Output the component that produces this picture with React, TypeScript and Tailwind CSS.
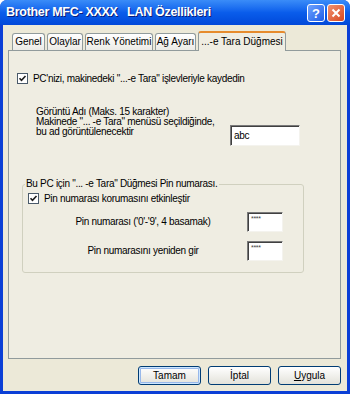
import React from "react";

function Check() {
  return (
    <div className="w-[11px] h-[11px] shrink-0 border border-[#4A5A6A] bg-white flex items-center justify-center">
      <svg width="9" height="9" viewBox="0 0 9 9">
        <path d="M1.5 4.2 L3.5 6.3 L7.5 2" stroke="#1E1E1E" strokeWidth="1.6" fill="none" />
      </svg>
    </div>
  );
}

function Field({ w, h, children }: { w: string; h: string; children?: React.ReactNode }) {
  return (
    <div
      className={`${w} ${h} shrink-0 bg-white border-t border-l border-t-[#7A7A7A] border-l-[#7A7A7A] border-r border-b border-r-[#F4F3EE] border-b-[#F4F3EE] shadow-[inset_1px_1px_0_#404040]`}
    >
      {children}
    </div>
  );
}

function Tab({ label, w }: { label: string; w: string }) {
  return (
    <div
      className={`${w} h-[17px] border border-b-0 border-[#919B9C] rounded-t-[3px] bg-gradient-to-b from-white to-[#ECEBE6] flex items-center justify-center text-[10px] text-black leading-none`}
    >
      {label}
    </div>
  );
}

function Btn({ label, primary }: { label: React.ReactNode; primary?: boolean }) {
  return (
    <div
      className={`w-[63px] h-[19px] rounded-[3px] border border-[#003C74] bg-gradient-to-b from-white to-[#E3E2DA] flex items-center justify-center text-[10px] text-black leading-none ${
        primary ? "shadow-[inset_0_0_0_1px_#CEE7FF,inset_0_0_0_2px_#98B8EA]" : ""
      }`}
    >
      {label}
    </div>
  );
}

export default function App() {
  return (
    <div className="w-[350px] h-[394px] flex flex-col bg-[#0B3FD6] rounded-t-[7px] overflow-hidden font-['Liberation_Sans',Arial,sans-serif]">
      {/* title bar */}
      <div className="h-[25px] shrink-0 flex items-center pl-[6px] pr-[5px] bg-gradient-to-b from-[#3A8CF8] via-[#0A5DEB] to-[#0248D9]">
        <span className="text-white font-bold text-[12.5px] tracking-[-0.3px] whitespace-pre [text-shadow:1px_1px_0_#0A1E7A]">
          Brother MFC- XXXX   LAN Özellikleri
        </span>
        <div className="ml-auto flex gap-[2px] pt-[1px]">
          <div className="w-[18px] h-[18px] rounded-[3px] border border-white bg-gradient-to-br from-[#6EA2FF] to-[#1D5CE6] flex items-center justify-center text-white font-bold text-[13px] leading-none">
            ?
          </div>
          <div className="w-[18px] h-[18px] rounded-[3px] border border-white bg-gradient-to-br from-[#F0916E] to-[#D7451B] flex items-center justify-center">
            <svg width="10" height="10" viewBox="0 0 10 10">
              <path d="M1.5 1.5 L8.5 8.5 M8.5 1.5 L1.5 8.5" stroke="white" strokeWidth="2" />
            </svg>
          </div>
        </div>
      </div>

      {/* body */}
      <div className="flex-1 mx-[3px] mb-[3px] bg-[#ECE9D8] flex flex-col pl-[5px] pr-[6px]">
        {/* tabs */}
        <div className="mt-[5px] h-[20px] flex items-end pl-[4px] gap-[2px] relative z-10">
          <Tab label="Genel" w="w-[33px]" />
          <Tab label="Olaylar" w="w-[36px]" />
          <Tab label="Renk Yönetimi" w="w-[68px]" />
          <Tab label="Ağ Ayarı" w="w-[41px]" />
          <div className="w-[88px] h-[20px] -mb-px border border-b-0 border-[#919B9C] border-t-[#E68B2C] border-t-2 rounded-t-[3px] bg-[#EFEDE2] flex items-center justify-center text-[10px] text-black leading-none">
            ...-e Tara Düğmesi
          </div>
        </div>

        {/* panel */}
        <div className="h-[309px] shrink-0 border border-[#919B9C] bg-[#EFEDE2] text-[10px] text-black leading-[10px] tracking-[-0.3px]">
          <div className="flex items-center pl-[8px] pt-[22px] gap-[5px]">
            <Check />
            <span>PC'nizi, makinedeki "...-e Tara" işlevleriyle kaydedin</span>
          </div>

          <div className="flex pl-[27px] mt-[23px]">
            <div className="w-[194px]">
              <div>Görüntü Adı (Maks. 15 karakter)</div>
              <div>Makinede "... -e Tara" menüsü seçildiğinde,</div>
              <div>bu ad görüntülenecektir</div>
            </div>
            <div className="mt-[18px]">
              <Field w="w-[70px]" h="h-[21px]">
                <div className="pl-[3px] pt-[5px] text-[10px] leading-none">abc</div>
              </Field>
            </div>
          </div>

          <fieldset className="ml-[13px] mt-[33px] w-[282px] border border-[#D0D0BF] rounded-[3px] px-0 pb-[11px]">
            <legend className="ml-[2px] px-[1px] leading-[10px]">
              Bu PC için "... -e Tara" Düğmesi Pin numarası.
            </legend>
            <div className="flex items-center pl-[5px] pt-[4px] gap-[5px]">
              <Check />
              <span>Pin numarası korumasını etkinleştir</span>
            </div>
            <div className="flex items-center pl-[16px] mt-[8px]">
              <div className="w-[208px] text-center">Pin numarası ('0'-'9', 4 basamak)</div>
              <Field w="w-[36px]" h="h-[20px]">
                <div className="pl-[3px] pt-[2px] text-[7px] leading-none text-[#444]">****</div>
              </Field>
            </div>
            <div className="flex items-center pl-[16px] mt-[9px]">
              <div className="w-[208px] text-center">Pin numarasını yeniden gir</div>
              <Field w="w-[36px]" h="h-[20px]">
                <div className="pl-[3px] pt-[2px] text-[7px] leading-none text-[#444]">****</div>
              </Field>
            </div>
          </fieldset>
        </div>

        {/* buttons */}
        <div className="mt-[7px] flex justify-end gap-[7px]">
          <Btn label="Tamam" primary />
          <Btn label="İptal" />
          <Btn
            label={
              <span>
                <span className="underline">U</span>ygula
              </span>
            }
          />
        </div>
      </div>
    </div>
  );
}
